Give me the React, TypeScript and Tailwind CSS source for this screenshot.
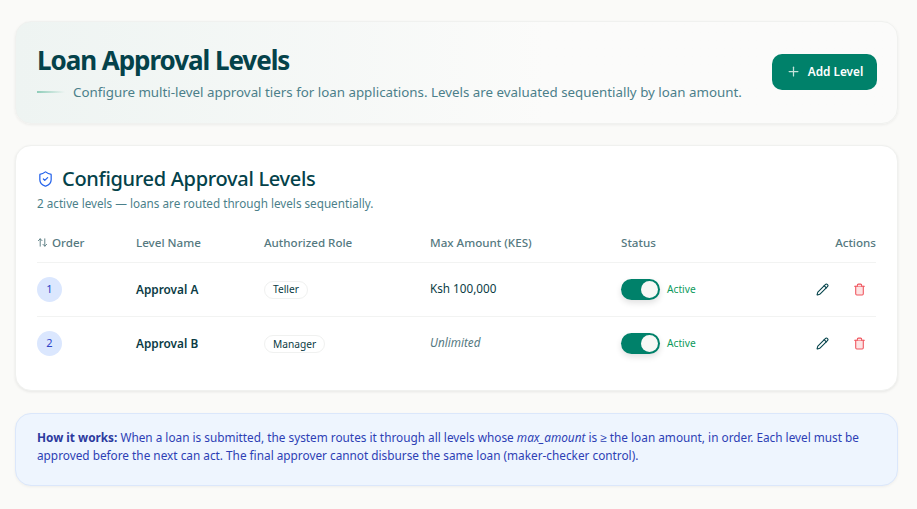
import { ArrowUpDown, Pencil, Plus, ShieldCheck, Trash2 } from 'lucide-react';

const levels = [
  { order: 1, name: 'Approval A', role: 'Teller', amount: 'Ksh 100,000' },
  { order: 2, name: 'Approval B', role: 'Manager', amount: null }
];

const App = () => {
  return (
    <div className="min-h-[509px] bg-[#fafaf8] pl-[15px] pr-[19px] pt-[21px] pb-6 font-['Noto_Sans',sans-serif] text-[#04424a]">
      {/* Header */}
      <div className="flex h-[103px] items-center justify-between rounded-2xl border border-[#f0f1ef] bg-gradient-to-r from-[#eef4f2] to-[#fbfbfa] to-60% pb-[2px] pl-[21px] pr-[20px] shadow-[0_1px_3px_rgba(0,0,0,0.06)]">
        <div>
          <h1 className="text-[26px] leading-[36px] font-bold tracking-[-1.05px] text-[#04424a]">Loan Approval Levels</h1>
          <div className="mt-[4px] flex items-center gap-2">
            <span className="h-[2px] w-7 bg-gradient-to-r from-[#8fcdb9] to-transparent" />
            <p className="text-[13.33px] leading-5 whitespace-nowrap text-[#4b7f8a]">
              Configure multi-level approval tiers for loan applications. Levels are evaluated sequentially by loan amount.
            </p>
          </div>
        </div>
        <button className="flex h-[36px] w-[105px] items-center justify-center gap-[7px] rounded-[10px] bg-[#00816a] text-[11.8px] font-semibold text-white">
          <Plus className="h-[15px] w-[15px] text-[#c4e3da]" />
          Add Level
        </button>
      </div>

      {/* Levels table */}
      <div className="mt-[21px] h-[246px] rounded-2xl border border-[#f0f1ef] bg-white px-[21px] pt-[19px] shadow-[0_1px_3px_rgba(0,0,0,0.08)]">
        <div className="flex items-center gap-[8px]">
          <ShieldCheck className="h-[18px] w-[17px] text-[#2563eb]" strokeWidth={1.75} />
          <h2 className="text-[20px] leading-[28px] font-medium tracking-[-0.3px] text-[#04424a]">Configured Approval Levels</h2>
        </div>
        <p className="mt-[2px] text-[11.7px] leading-4 text-[#4b7f8a]">2 active levels — loans are routed through levels sequentially.</p>

        <table className="mt-[13px] w-full table-fixed border-collapse text-left">
          <thead>
            <tr className="h-[38px] border-b border-[#f2f3f2] text-[11.6px] font-medium text-[#55797f]">
              <th className="w-[99px] font-medium">
                <span className="flex items-center gap-1">
                  <ArrowUpDown className="h-[11px] w-[11px]" />
                  Order
                </span>
              </th>
              <th className="w-[128px] font-medium">Level Name</th>
              <th className="w-[166px] font-medium">Authorized Role</th>
              <th className="w-[191px] font-medium">Max Amount (KES)</th>
              <th className="font-medium">Status</th>
              <th className="text-right font-medium">Actions</th>
            </tr>
          </thead>
          <tbody>
            {levels.map((level) => (
              <tr key={level.order} className="h-[54px] border-b border-[#f2f3f2] last:border-b-0">
                <td>
                  <span className="flex h-[25px] w-[25px] items-center justify-center rounded-full bg-[#dbe7fe] text-[11px] text-[#2d43c8]">
                    {level.order}
                  </span>
                </td>
                <td className="pt-[2px] text-[11.8px] font-semibold text-[#0b3b44]">{level.name}</td>
                <td className="pt-[2px]">
                  <span className="flex h-[18px] w-fit items-center rounded-full border border-[#f0f1f0] px-[8px] text-[10.2px] text-[#0b3b44]">
                    {level.role}
                  </span>
                </td>
                <td className="text-[11.7px] text-[#0b3b44]">
                  {level.amount ?? <em className="text-[#55797f]">Unlimited</em>}
                </td>
                <td>
                  <div className="flex items-center gap-[7px]">
                    <span className="flex h-[21px] w-[39px] items-center justify-end rounded-full bg-[#00816a] pr-[2px] shadow-[0_3px_6px_rgba(0,0,0,0.12)]">
                      <span className="h-[17px] w-[17px] rounded-full bg-[#f7f8f5]" />
                    </span>
                    <span className="pt-[1px] text-[10.2px] text-[#0c9a5c]">Active</span>
                  </div>
                </td>
                <td>
                  <div className="flex items-center justify-end gap-[24px] pr-[10px]">
                    <Pencil className="h-[13px] w-[13px] text-[#04424a]" />
                    <Trash2 className="h-[13px] w-[13px] fill-[#fde4e4] text-[#f0565f]" />
                  </div>
                </td>
              </tr>
            ))}
          </tbody>
        </table>
      </div>

      {/* Info note */}
      <div className="mt-[22px] h-[73px] rounded-2xl border border-[#dbe7fb] bg-[#eef5fe] px-[21px] pt-[15px] text-[11.8px] leading-[17.5px] text-[#2d3fb5] shadow-[0_1px_3px_rgba(0,0,0,0.05)]">
        <strong className="font-bold text-[#2c3a9e]">How it works:</strong> When a loan is submitted, the system routes it through all levels whose <em>max_amount</em> is ≥ the loan amount, in order. Each level must be approved before the next can act. The final approver cannot disburse the same loan (maker-checker control).
      </div>
    </div>
  );
};

export default App;
